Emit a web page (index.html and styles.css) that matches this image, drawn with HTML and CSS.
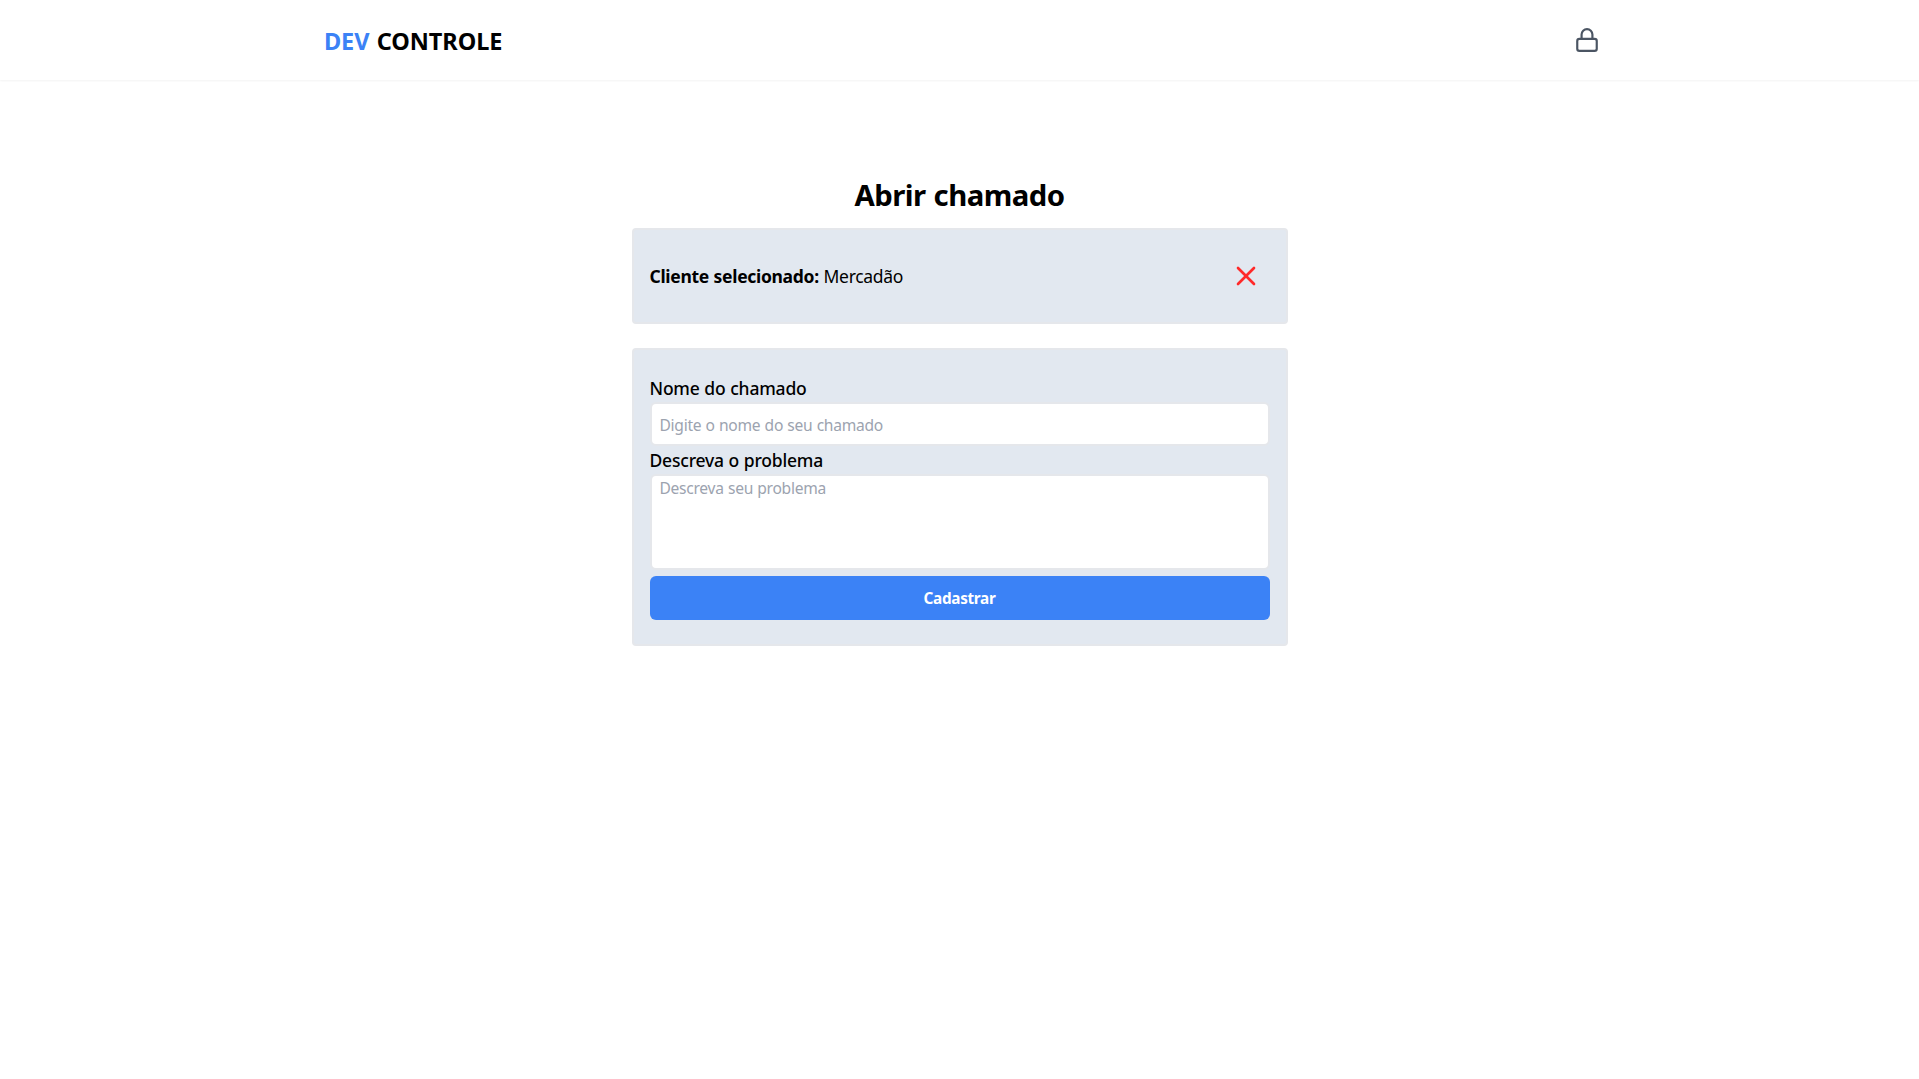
FILE: index.html
```html
<!DOCTYPE html>
<html lang="pt-BR">
<head>
  <meta charset="utf-8">
  <title>Dev Controle - Abrir chamado</title>
  <link rel="stylesheet" href="styles.css">
</head>
<body>
  <header class="header">
    <div class="header-inner">
      <a class="logo" href="#"><span class="logo-accent">DEV</span> CONTROLE</a>
      <button class="icon-button" aria-label="Entrar">
        <svg class="icon-lock" width="26" height="26" viewBox="0 0 24 24" fill="none" stroke="currentColor" stroke-width="2" stroke-linecap="round" stroke-linejoin="round">
          <rect x="3" y="11" width="18" height="11" rx="2" ry="2"></rect>
          <path d="M7 11V7a5 5 0 0 1 10 0v4"></path>
        </svg>
      </button>
    </div>
  </header>

  <main class="main">
    <h1 class="title">Abrir chamado</h1>

    <section class="panel customer">
      <p class="customer-text"><strong>Cliente selecionado:</strong> Mercadão</p>
      <button class="icon-button clear" aria-label="Remover cliente">
        <svg width="32" height="32" viewBox="0 0 24 24" fill="none" stroke="currentColor" stroke-width="2" stroke-linecap="round" stroke-linejoin="round">
          <line x1="18" y1="6" x2="6" y2="18"></line>
          <line x1="6" y1="6" x2="18" y2="18"></line>
        </svg>
      </button>
    </section>

    <form class="panel ticket">
      <label class="label" for="name">Nome do chamado</label>
      <input class="field line" id="name" type="text" placeholder="Digite o nome do seu chamado">
      <label class="label" for="description">Descreva o problema</label>
      <textarea class="field area" id="description" placeholder="Descreva seu problema"></textarea>
      <button class="submit" type="button">Cadastrar</button>
    </form>
  </main>
</body>
</html>
```
FILE: styles.css
```css
* {
  box-sizing: border-box;
  margin: 0;
  padding: 0;
}

body {
  background: #fff;
  color: #000;
  font-family: "Segoe UI", "Noto Sans", sans-serif;
  font-size: 16px;
  line-height: 24px;
}

button,
input,
textarea {
  font: inherit;
  letter-spacing: inherit;
}

.header {
  height: 80px;
  padding: 0 8px;
  background: #fff;
  box-shadow: 0 1px 2px rgba(0, 0, 0, 0.05);
}

.header-inner {
  display: flex;
  align-items: center;
  justify-content: space-between;
  max-width: 1280px;
  height: 100%;
  margin: 0 auto;
  padding-left: 4.5px;
}

.logo {
  padding-top: 2px;
  color: #000;
  font-size: 23.5px;
  font-weight: 700;
  letter-spacing: -0.1px;
  line-height: 32px;
  text-decoration: none;
  word-spacing: 1.5px;
}

.logo-accent {
  color: #3b82f6;
}

.icon-button {
  display: flex;
  border: 0;
  background: none;
}

.icon-lock {
  color: #4b5563;
}

.main {
  display: flex;
  flex-direction: column;
  width: 656px;
  margin: 97px auto 0;
}

.title {
  margin-bottom: 15px;
  font-size: 29.3px;
  font-weight: 700;
  letter-spacing: -0.55px;
  line-height: 36px;
  text-align: center;
  word-spacing: 1px;
}

.panel {
  padding: 24px 16px;
  border: 2px solid #e5e7eb;
  border-radius: 4px;
  background: #e2e8f0;
}

.customer {
  display: flex;
  align-items: center;
  justify-content: space-between;
  height: 96px;
  padding-right: 24px;
}

.customer-text {
  font-size: 17.5px;
  letter-spacing: -0.31px;
  line-height: 28px;
  word-spacing: 0.5px;
}

.clear {
  color: #ff2929;
}

.ticket {
  display: flex;
  flex-direction: column;
  margin-top: 24px;
}

.label {
  font-size: 17.5px;
  font-weight: 500;
  letter-spacing: -0.2px;
  line-height: 28px;
  word-spacing: 0.4px;
}

.field {
  width: 100%;
  height: 44px;
  padding: 0 8px;
  border: 2px solid #e5e7eb;
  border-radius: 6px;
  outline: 0;
  background: #fff;
  font-size: 15.6px;
  letter-spacing: -0.28px;
  word-spacing: 0.5px;
}

.field::placeholder {
  color: #9ca3af;
}

.line {
  padding-top: 2px;
}

.area {
  height: 96px;
  margin-bottom: 6px;
  resize: none;
}

.submit {
  height: 44px;
  border: 0;
  border-radius: 6px;
  background: #3b82f6;
  color: #fff;
  font-size: 15.3px;
  font-weight: 700;
  letter-spacing: -0.3px;
}
```
